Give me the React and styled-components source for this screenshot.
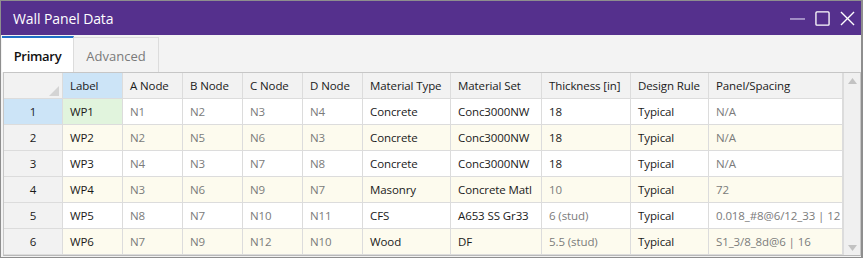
import React from 'react';
import styled, { createGlobalStyle } from 'styled-components';

const GlobalStyle = createGlobalStyle`
    html, body {
        margin: 0;
        padding: 0;
        background: #ffffff;
    }
    * {
        box-sizing: border-box;
    }
`;

const columns = [
    { key: 'label', title: 'Label', width: 60 },
    { key: 'a', title: 'A Node', width: 60 },
    { key: 'b', title: 'B Node', width: 60 },
    { key: 'c', title: 'C Node', width: 60 },
    { key: 'd', title: 'D Node', width: 60 },
    { key: 'type', title: 'Material Type', width: 88 },
    { key: 'set', title: 'Material Set', width: 91 },
    { key: 'thick', title: 'Thickness [in]', width: 89 },
    { key: 'rule', title: 'Design Rule', width: 78 },
    { key: 'panel', title: 'Panel/Spacing', width: 134 },
];

const dimKeys = ['a', 'b', 'c', 'd', 'panel'];

const rows = [
    { label: 'WP1', a: 'N1', b: 'N2', c: 'N3', d: 'N4', type: 'Concrete', set: 'Conc3000NW', thick: '18', rule: 'Typical', panel: 'N/A' },
    { label: 'WP2', a: 'N2', b: 'N5', c: 'N6', d: 'N3', type: 'Concrete', set: 'Conc3000NW', thick: '18', rule: 'Typical', panel: 'N/A' },
    { label: 'WP3', a: 'N4', b: 'N3', c: 'N7', d: 'N8', type: 'Concrete', set: 'Conc3000NW', thick: '18', rule: 'Typical', panel: 'N/A' },
    { label: 'WP4', a: 'N3', b: 'N6', c: 'N9', d: 'N7', type: 'Masonry', set: 'Concrete Matl', thick: '10', thickDim: true, rule: 'Typical', panel: '72' },
    { label: 'WP5', a: 'N8', b: 'N7', c: 'N10', d: 'N11', type: 'CFS', set: 'A653 SS Gr33', thick: '6 (stud)', thickDim: true, rule: 'Typical', panel: '0.018_#8@6/12_33 | 12' },
    { label: 'WP6', a: 'N7', b: 'N9', c: 'N12', d: 'N10', type: 'Wood', set: 'DF', thick: '5.5 (stud)', thickDim: true, rule: 'Typical', panel: 'S1_3/8_8d@6 | 16' },
];

const gridTemplate = `59px ${columns.map((c) => `${c.width}px`).join(' ')}`;

function App() {
    return (
        <>
            <GlobalStyle />
            <Window>
                <TitleBar>
                    <Title>Wall Panel Data</Title>
                    <Controls>
                        <ControlIcon viewBox="0 0 16 16" $dim>
                            <line x1="0" y1="8.5" x2="16" y2="8.5" />
                        </ControlIcon>
                        <ControlIcon viewBox="0 0 16 16">
                            <rect x="1" y="1" width="14" height="14" rx="1" />
                        </ControlIcon>
                        <ControlIcon viewBox="0 0 16 16">
                            <line x1="1" y1="1" x2="15" y2="15" />
                            <line x1="15" y1="1" x2="1" y2="15" />
                        </ControlIcon>
                    </Controls>
                </TitleBar>

                <TabStrip>
                    <Tab $active>Primary</Tab>
                    <Tab>Advanced</Tab>
                </TabStrip>

                <GridFrame>
                    <GridBody>
                        <Row>
                            <Corner>
                                <CornerMark />
                            </Corner>
                            {columns.map((col) => (
                                <HeadCell key={col.key} $selected={col.key === 'label'}>
                                    {col.title}
                                </HeadCell>
                            ))}
                        </Row>
                        {rows.map((row, i) => (
                            <Row key={row.label}>
                                <RowHead $selected={i === 0}>{i + 1}</RowHead>
                                {columns.map((col) => (
                                    <Cell
                                        key={col.key}
                                        $alt={i % 2 === 1}
                                        $current={i === 0 && col.key === 'label'}
                                        $dim={dimKeys.includes(col.key) || (col.key === 'thick' && row.thickDim)}
                                    >
                                        {row[col.key]}
                                    </Cell>
                                ))}
                            </Row>
                        ))}
                    </GridBody>
                    <ScrollBar>
                        <Arrow viewBox="0 0 9 6">
                            <polygon points="4.5,0 9,6 0,6" />
                        </Arrow>
                        <Arrow viewBox="0 0 9 6">
                            <polygon points="0,0 9,0 4.5,6" />
                        </Arrow>
                    </ScrollBar>
                </GridFrame>
            </Window>
        </>
    );
}

const Window = styled.div`
    width: 863px;
    height: 258px;
    display: flex;
    flex-direction: column;
    border: 1px solid #8e8e8e;
    border-right-width: 2px;
    background: #f3f3f3;
    font-family: "Open Sans", "Noto Sans", sans-serif;
    overflow: hidden;
`;

const TitleBar = styled.div`
    height: 34px;
    flex-shrink: 0;
    display: flex;
    align-items: center;
    justify-content: space-between;
    background: #55308d;
    padding: 0 6px 0 12px;
`;

const Title = styled.div`
    color: #ffffff;
    font-size: 14px;
    font-weight: 500;
    letter-spacing: -0.1px;
`;

const Controls = styled.div`
    display: flex;
    align-items: center;
    gap: 10px;
`;

const ControlIcon = styled.svg`
    width: 15px;
    height: 15px;
    fill: none;
    stroke: ${(p) => (p.$dim ? '#a793c9' : '#ffffff')};
    stroke-width: ${(p) => (p.$dim ? 2 : 1.4)};
`;

const TabStrip = styled.div`
    height: 37px;
    flex-shrink: 0;
    display: flex;
    align-items: flex-end;
    padding-left: 1px;
    background: #f3f3f3;
`;

const Tab = styled.div`
    height: ${(p) => (p.$active ? '36px' : '35px')};
    width: ${(p) => (p.$active ? '72px' : '85px')};
    display: flex;
    align-items: center;
    justify-content: center;
    padding-top: 2px;
    font-size: 13px;
    font-weight: ${(p) => (p.$active ? 600 : 400)};
    color: ${(p) => (p.$active ? '#111111' : '#7a7a7a')};
    background: ${(p) => (p.$active ? '#ffffff' : '#f3f3f3')};
    border-top: ${(p) => (p.$active ? '2px solid #1f6fc6' : '1px solid #dcdcdc')};
    border-right: 1px solid #dcdcdc;
    letter-spacing: ${(p) => (p.$active ? '-0.3px' : '0')};
`;

const GridFrame = styled.div`
    flex: 1;
    display: flex;
    margin: 0 0 1px 2px;
    border: 1px solid #c6c6c6;
    border-bottom-color: #b8b8b8;
    background: #ffffff;
    overflow: hidden;
`;

const GridBody = styled.div`
    width: 839px;
    display: flex;
    flex-direction: column;
`;

const Row = styled.div`
    display: grid;
    grid-template-columns: ${gridTemplate};
    height: 26px;
    flex-shrink: 0;
`;

const BaseCell = styled.div`
    display: flex;
    align-items: center;
    border-right: 1px solid #dcdcdc;
    border-bottom: 1px solid #dcdcdc;
    font-size: 11.5px;
    letter-spacing: -0.1px;
    white-space: nowrap;
    overflow: hidden;
`;

const Corner = styled(BaseCell)`
    position: relative;
    background: #f2f2f2;
`;

const CornerMark = styled.div`
    position: absolute;
    right: 3px;
    bottom: 2px;
    width: 0;
    height: 0;
    border-left: 10px solid transparent;
    border-bottom: 10px solid #d4d4d4;
`;

const HeadCell = styled(BaseCell)`
    padding-left: 7px;
    color: #1a1a1a;
    background: ${(p) => (p.$selected ? '#cce4f7' : '#f2f2f2')};
`;

const RowHead = styled(BaseCell)`
    justify-content: center;
    color: #1a1a1a;
    background: ${(p) => (p.$selected ? '#cce4f7' : '#f2f2f2')};
`;

const Cell = styled(BaseCell)`
    padding-left: 7px;
    color: ${(p) => (p.$dim ? '#7b7b7b' : '#1a1a1a')};
    background: ${(p) => (p.$current ? '#e1f4dd' : p.$alt ? '#fdfbee' : '#ffffff')};
`;

const ScrollBar = styled.div`
    width: 17px;
    display: flex;
    flex-direction: column;
    justify-content: space-between;
    align-items: center;
    padding: 5px 0 4px;
    background: #f0f0f0;
    border-left: 1px solid #dcdcdc;
`;

const Arrow = styled.svg`
    width: 9px;
    height: 6px;
    fill: #c2c2c2;
`;

export default App;
